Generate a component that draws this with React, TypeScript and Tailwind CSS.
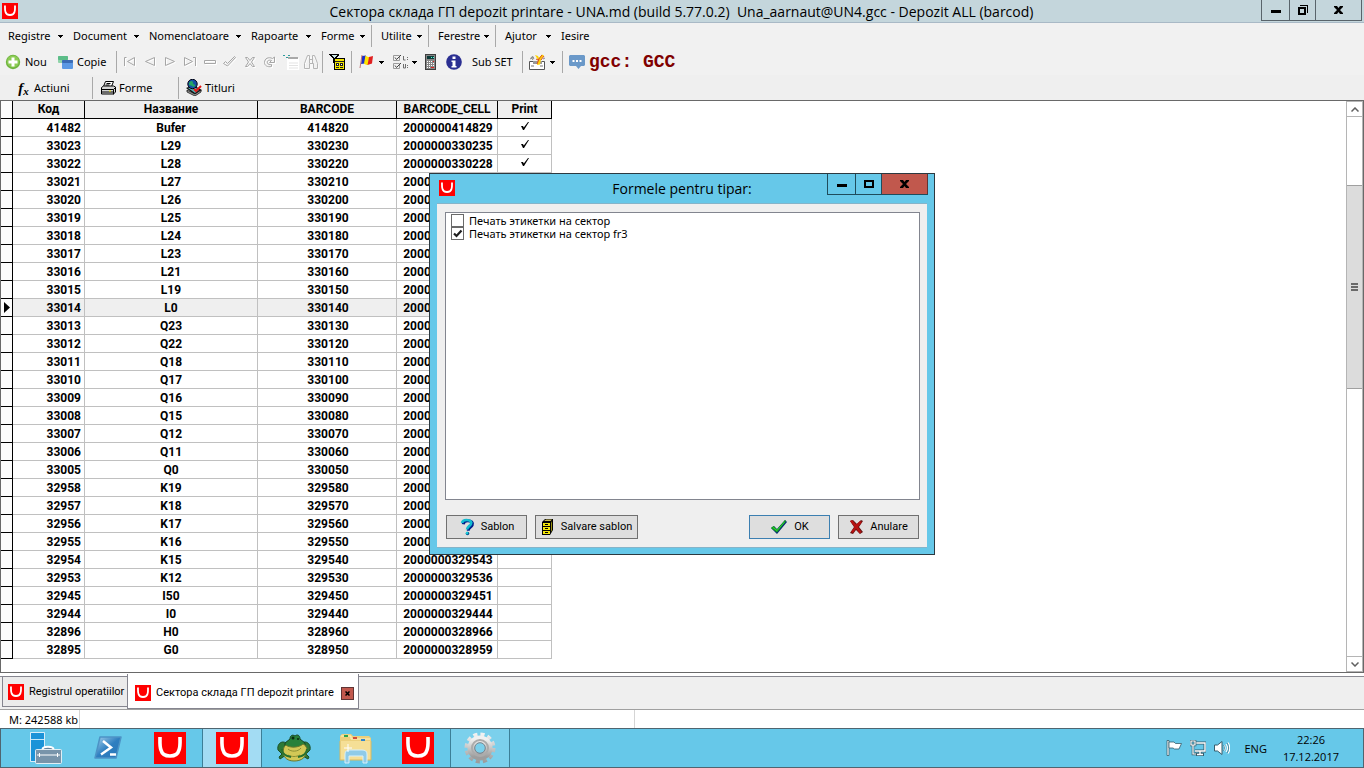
import { useState } from "react";
import type { ReactNode } from "react";

type Row = { code: string; name: string; barcode: string; cell: string; print?: boolean };

const rows: Row[] = [
  { code: "41482", name: "Bufer", barcode: "414820", cell: "2000000414829", print: true },
  { code: "33023", name: "L29", barcode: "330230", cell: "2000000330235", print: true },
  { code: "33022", name: "L28", barcode: "330220", cell: "2000000330228", print: true },
  { code: "33021", name: "L27", barcode: "330210", cell: "2000000330211" },
  { code: "33020", name: "L26", barcode: "330200", cell: "2000000330204" },
  { code: "33019", name: "L25", barcode: "330190", cell: "2000000330198" },
  { code: "33018", name: "L24", barcode: "330180", cell: "2000000330181" },
  { code: "33017", name: "L23", barcode: "330170", cell: "2000000330174" },
  { code: "33016", name: "L21", barcode: "330160", cell: "2000000330167" },
  { code: "33015", name: "L19", barcode: "330150", cell: "2000000330150" },
  { code: "33014", name: "L0", barcode: "330140", cell: "2000000330143" },
  { code: "33013", name: "Q23", barcode: "330130", cell: "2000000330136" },
  { code: "33012", name: "Q22", barcode: "330120", cell: "2000000330129" },
  { code: "33011", name: "Q18", barcode: "330110", cell: "2000000330112" },
  { code: "33010", name: "Q17", barcode: "330100", cell: "2000000330105" },
  { code: "33009", name: "Q16", barcode: "330090", cell: "2000000330099" },
  { code: "33008", name: "Q15", barcode: "330080", cell: "2000000330082" },
  { code: "33007", name: "Q12", barcode: "330070", cell: "2000000330075" },
  { code: "33006", name: "Q11", barcode: "330060", cell: "2000000330068" },
  { code: "33005", name: "Q0", barcode: "330050", cell: "2000000330051" },
  { code: "32958", name: "K19", barcode: "329580", cell: "2000000329581" },
  { code: "32957", name: "K18", barcode: "329570", cell: "2000000329574" },
  { code: "32956", name: "K17", barcode: "329560", cell: "2000000329567" },
  { code: "32955", name: "K16", barcode: "329550", cell: "2000000329550" },
  { code: "32954", name: "K15", barcode: "329540", cell: "2000000329543" },
  { code: "32953", name: "K12", barcode: "329530", cell: "2000000329536" },
  { code: "32945", name: "I50", barcode: "329450", cell: "2000000329451" },
  { code: "32944", name: "I0", barcode: "329440", cell: "2000000329444" },
  { code: "32896", name: "H0", barcode: "328960", cell: "2000000328966" },
  { code: "32895", name: "G0", barcode: "328950", cell: "2000000328959" },
];

function Logo({ size }: { size: number }) {
  return (
    <svg width={size} height={size} viewBox="0 0 32 32" className="shrink-0">
      <rect width="32" height="32" fill="#ff0000" />
      <path d="M6 5c0 5-.5 9 1 13 1 4 4 6 9 6s8-2 9-6c1.500-4 1-8 1-13" fill="none" stroke="#fff" strokeWidth="3.600" />
    </svg>
  );
}

function Arrow() {
  return (
    <svg width="5" height="3" viewBox="0 0 5 3" className="shrink-0" shapeRendering="crispEdges">
      <path d="M0 0h5v1H4v1H3v1H2V2H1V1H0z" fill="#000" />
    </svg>
  );
}

const Sep = ({ className = "" }: { className?: string }) => (
  <div className={`w-px h-[22px] bg-[#a9a9a9] shrink-0 ${className}`} />
);

function MenuItem({ label, width }: { label: string; width: string }) {
  return (
    <button className={`flex items-center justify-between whitespace-nowrap shrink-0 ${width}`}>
      {label}
      <Arrow />
    </button>
  );
}

// greyed out navigator glyph with the white shadow below it
function NavIcon({ label, d }: { label: string; d: string }) {
  return (
    <button disabled aria-label={label} className="w-5 h-5 flex items-center justify-center shrink-0">
      <svg width="16" height="16" viewBox="0 0 16 16" fill="none">
        <path d={d} stroke="#fff" transform="translate(1 1)" />
        <path d={d} stroke="#a6a6a6" />
      </svg>
    </button>
  );
}

const navIcons = [
  { label: "First", d: "M2.500 12V3.500h2M12.500 3.500v8L5.500 7.500z" },
  { label: "Previous", d: "M12.500 3.500v8L3.500 7.500z" },
  { label: "Next", d: "M3.500 3.500v8l9-4z" },
  { label: "Last", d: "M11 3.500h2.500V12M2.500 3.500v8l8-4z" },
  { label: "Delete", d: "M2.500 6.500h11v3h-11z" },
  { label: "Post", d: "M1.500 9.500l2-2 2 2 7-7 1 1-8 8.500z" },
  { label: "Cancel", d: "M3.500 3.500h2l2.500 3 2.500-3h2L9.500 8l3 4.500h-2L8 9.500l-2.500 3h-2l3-4.500z" },
  { label: "Refresh", d: "M12.500 3v5.500h-5l2-2c-3-1-5 .5-4 2.500.500 1.500 2 2 4 1.500v2c-4 1-7-1-7-4 0-4 4-6 8-4z" },
];

function CaptionButtons({ restore, danger }: { restore?: boolean; danger?: boolean }) {
  const edge = danger ? "border-[#1f4c5c]" : "border-[#59646b]";
  return (
    <div className={`flex h-[21px] border-l border-b shrink-0 ${edge}`}>
      <button aria-label="Minimize" className={`w-7 flex items-center justify-center border-r ${edge}`}>
        <svg width="10" height="10" viewBox="0 0 10 10"><path d="M0 5h10v3H0z" /></svg>
      </button>
      <button aria-label="Maximize" className={`w-[26px] flex items-center justify-center border-r ${edge}`}>
        {restore ? (
          <svg width="10" height="10" viewBox="0 0 10 10" shapeRendering="crispEdges">
            <path d="M0 2h8v8H0zM2 4v4h4V4zM2 0h8v8H9V1H2z" fillRule="evenodd" />
          </svg>
        ) : (
          <svg width="10" height="8" viewBox="0 0 10 8" shapeRendering="crispEdges">
            <path d="M0 0h10v8H0zM2 2v4h6V2z" fillRule="evenodd" />
          </svg>
        )}
      </button>
      <button
        aria-label="Close"
        className={`w-[46px] flex items-center justify-center border-r ${danger ? "bg-[#c1584d] border-[#5f3434]" : edge}`}
      >
        <svg width="9" height="8" viewBox="0 0 9 8">
          <path d="M0 0h3l1.500 2L6 0h3v1L6 4l3 3v1H6L4.500 6 3 8H0V7l3-3-3-3z" />
        </svg>
      </button>
    </div>
  );
}

function NewIcon() {
  return (
    <svg width="16" height="16" viewBox="0 0 16 16">
      <circle cx="8" cy="8" r="7.200" fill="#6fb43f" />
      <circle cx="8" cy="7.500" r="6" fill="#8ccb55" />
      <path d="M6.500 3.500h3v3h3v3h-3v3h-3v-3h-3v-3h3z" fill="#fff" />
    </svg>
  );
}

function CopyIcon() {
  return (
    <svg width="16" height="16" viewBox="0 0 16 16">
      <rect x="1" y="2" width="10" height="7" rx="1" fill="#8fd3a9" />
      <rect x="1" y="2" width="10" height="4" rx="1" fill="#5cbd88" />
      <rect x="5" y="6" width="11" height="9" rx="1" fill="#5b98e4" />
      <rect x="5" y="6" width="11" height="3" rx="1" fill="#3a6bb5" />
    </svg>
  );
}

function CalendarIcon() {
  return (
    <svg width="18" height="18" viewBox="0 0 18 18">
      <path d="M1 2h2v1H1zM4 4h2v1H4zM6 2h2v1H6z" fill="#2f9c9c" />
      <path d="M5 5h12v12H5z" fill="#fff" />
      <path d="M6 4h10v2H6z" fill="#a9a9a9" />
      <path d="M7 10h9M7 12.500h9M7 15h9" stroke="#e3e3e3" />
    </svg>
  );
}

function BinocularsIcon() {
  return (
    <svg width="16" height="16" viewBox="0 0 16 16" fill="none">
      <path d="M2 16V11l3-8h2v12H2M9 15V3h2l4 8v5" stroke="#fff" />
      <path d="M1.500 14.500v-5l3-8h2v4h3v-4h2l3 8v5h-4v-5h-4v5zM6.500 5v4M9.500 5v4" stroke="#b5b5b5" />
    </svg>
  );
}

function FilterIcon() {
  return (
    <svg width="16" height="16" viewBox="0 0 16 16" shapeRendering="crispEdges">
      <path d="M5 4h11v12H5z" fill="#000" />
      <path d="M6 5h9v10H6z" fill="#f5e800" />
      <path d="M6 7h9v1H6zM7 9h3v3H7zM11 9h3v3h-3zM7 13h3v1H7zM11 13h3v1h-3z" fill="#222" />
      <path d="M12 10h1v1h-1zM8 10h1v1H8z" fill="#fff" />
      <path d="M0 0h10v1L6 5v6L4 9V5L0 1z" fill="#000" />
      <path d="M2 1h6L5 4z" fill="#c9e4e4" />
    </svg>
  );
}

function FlagIcon() {
  return (
    <svg width="16" height="16" viewBox="0 0 16 16">
      <path d="M3 2l4-.5-1 8-4 .5z" fill="#1c2ec9" />
      <path d="M6.500 1.500c1.500 1 2.500 1.500 4 1.500L9 11c-1.500 0-2.500-.5-4-1.500z" fill="#ffe500" />
      <path d="M10 3l4-1-1 7.500-4.500 1.500z" fill="#e02020" />
      <path d="M3 1L1 14" stroke="#bf7575" />
    </svg>
  );
}

function CheckListIcon() {
  return (
    <svg width="16" height="16" viewBox="0 0 16 16" fill="none" stroke="#6e6e6e">
      <path d="M.5 1.500h6v5h-6zM.5 9.500h6v5h-6z" stroke="#9b9b9b" />
      <path d="M2 3.500l1.500 2L8 1M2 11.500l1.500 2L8 9" stroke="#444" />
      <path d="M10.500 2v4h2M10.500 10v4h2v-4M14.500 3v1M14.500 5v1M14.500 11v1M14.500 13v1" />
    </svg>
  );
}

function CalculatorIcon() {
  return (
    <svg width="12" height="16" viewBox="0 0 12 16" shapeRendering="crispEdges">
      <path d="M0 0h11v16H0z" fill="#3d3d3d" />
      <path d="M1 1h9v14H1z" fill="#868686" />
      <path d="M2 2h7v3H2z" fill="#0c3938" />
      <path d="M6 3h1v1H6zM8 3h1v1H8z" fill="#4fffd9" />
      <path d="M2 7h1v1H2zM4 7h1v1H4zM6 7h1v1H6zM2 9h1v1H2zM4 9h1v1H4zM6 9h1v1H6zM8 9h1v1H8zM2 11h1v1H2zM4 11h1v1H4zM6 11h1v1H6zM8 11h1v1H8zM2 13h1v1H2zM4 13h1v1H4z" fill="#fff" />
      <path d="M8 7h1v1H8zM6 13h3v1H6z" fill="#d22" />
    </svg>
  );
}

function InfoIcon() {
  return (
    <svg width="16" height="16" viewBox="0 0 16 16">
      <circle cx="8" cy="8" r="7.800" fill="#2b2f92" />
      <path d="M6.500 2.500h3v2.500h-3zM5.500 6.500h4V12h1v1.500h-5V12h1V8h-1z" fill="#fff" />
    </svg>
  );
}

function MailIcon() {
  return (
    <svg width="17" height="16" viewBox="0 0 17 16">
      <path d="M.5 7.500h15v8H.5z" fill="#fff" stroke="#555" />
      <path d="M1 5l4-2M2 3l2 3M3 2l2 3M14 5l2-1" stroke="#888" />
      <path d="M4 7h9v3H4z" fill="#999" />
      <path d="M6 1l3 1 1 2 3-3.500 2 1-3 4-1 5-3 .5 1-5z" fill="#ffd400" />
      <path d="M7 5l2 1 4-5M12 6l3-4M8 10l2-5" stroke="#d84a2a" fill="none" />
      <path d="M2 12h3M11 12h3" stroke="#777" />
    </svg>
  );
}

function ChatIcon() {
  return (
    <svg width="16" height="16" viewBox="0 0 16 16">
      <path d="M1 1h14l1 1v9l-1 1h-3l-2.500 3L7 12H1l-1-1V2z" fill="#6b99c9" />
      <path d="M3.500 6h2v2h-2zM7 6h2v2H7zM10.500 6h2v2h-2z" fill="#fff" />
    </svg>
  );
}

function PrinterIcon() {
  return (
    <svg width="16" height="16" viewBox="0 0 16 16">
      <path d="M5.500 1.500h8l-2 5h-8z" fill="#fff" stroke="#000" />
      <path d="M6.500 3.500h4M5.500 5h4" stroke="#000" />
      <path d="M1.500 7.500l2-1.500h10l2 1v5l-2 2h-12z" fill="#d5d5d5" stroke="#000" />
      <path d="M1 9.500h12.500L15 8M13.500 9.500v5M1 12h12" stroke="#000" fill="none" />
      <path d="M9 11h2" stroke="#e8e800" />
    </svg>
  );
}

function BookIcon() {
  return (
    <svg width="16" height="17" viewBox="0 0 16 17">
      <path d="M0 9l7-3 9 5-7 5z" fill="#111" />
      <path d="M1 11l8 4 6-4v2l-6 4-8-4z" fill="#9a9a9a" stroke="#000" strokeWidth=".7" />
      <path d="M2 9l5-2 6 4-4 3z" fill="#57aeb0" />
      <circle cx="6.500" cy="5" r="4.700" fill="#1650a8" stroke="#001" />
      <path d="M3 4c2-3 4-2 4 0s3 1 2 3-4-1-6-1z" fill="#25a565" />
      <path d="M8 10l2 2 5-5" stroke="#e41818" strokeWidth="2" fill="none" />
    </svg>
  );
}

function QuestionIcon() {
  return (
    <svg width="16" height="18" viewBox="0 0 16 18" fill="none">
      <path d="M3.500 5.500C4 2.500 6 2 8 2c4 0 5.500 2 4.500 4.500C11.500 8.500 8.500 9 8.500 12" stroke="#001f8a" strokeWidth="3" transform="translate(.7 .7)" />
      <path d="M3 5C3.500 2.500 5.500 2 7.500 2c4 0 5.500 2 4.500 4S8 9 8 11.500" stroke="#12bcd0" strokeWidth="2.600" />
      <circle cx="8.500" cy="15.500" r="1.800" fill="#085e96" />
      <circle cx="8" cy="15" r="1.200" fill="#12cbd9" />
    </svg>
  );
}

function CabinetIcon() {
  return (
    <svg width="14" height="16" viewBox="0 0 14 16">
      <path d="M1 3l3-3h8v11l-3 5H1z" fill="#000" />
      <path d="M3 2l2-1.500h6L9.500 2z" fill="#c9bb56" />
      <path d="M2 4h7v11H2z" fill="#f3e50a" />
      <path d="M2 7.500h7M2 11.500h7" stroke="#000" />
      <path d="M4 5h3v1H4zM4 9h3v1H4zM4 13h3v1H4z" fill="#000" />
      <path d="M10 4l1-2v9l-1 2z" fill="#9b9410" />
    </svg>
  );
}

function OkIcon() {
  return (
    <svg width="18" height="16" viewBox="0 0 18 16">
      <path d="M1 9l3-2 3 3 8-9 2 2-10 12z" fill="#052d75" />
      <path d="M1 9l2.500-2L7 10.500 15 1l1 1L7 13.500z" fill="#14a31b" />
      <path d="M3 8.500l4 3L14.500 3" stroke="#35da3e" fill="none" strokeWidth=".8" />
    </svg>
  );
}

function CancelIcon() {
  return (
    <svg width="15" height="16" viewBox="0 0 15 16">
      <path d="M1 2l3-1 4 4 4-4 2 1-4 6 4 5-3 2-4-4-3 4-3-1 4-6z" fill="#651313" />
      <path d="M1 2l2-1 4 4.500L11 2l2 1-4 5 3.500 5-2 1.500L7 9.500 4 14l-2-1 3.500-5z" fill="#b81212" />
    </svg>
  );
}

function ServerIcon() {
  return (
    <svg width="32" height="32" viewBox="0 0 32 32">
      <path d="M.5.5h14v29H.5z" fill="#1b93d8" stroke="#fff" strokeWidth=".8" />
      <path d="M1 7.500h13" stroke="#c5e8f8" />
      <path d="M13 17.500c0-3 10-3 10 0" fill="none" stroke="#fff" strokeWidth="3" />
      <path d="M14 18c0-2 8-2 8 0" fill="none" stroke="#65829a" strokeWidth="1.500" />
      <rect x="5.500" y="17.500" width="26" height="14" rx="1" fill="#7894aa" stroke="#fff" strokeWidth=".8" />
      <path d="M7 23h23" stroke="#fff" />
      <path d="M9 21h1v4H9zM27 21h1v4h-1z" fill="#fff" />
    </svg>
  );
}

function PowerShellIcon() {
  return (
    <svg width="32" height="32" viewBox="0 0 32 32">
      <defs>
        <linearGradient id="ps" x1="0" y1="0" x2="1" y2="1">
          <stop offset="0" stopColor="#a9d4ef" />
          <stop offset=".5" stopColor="#2f7fc0" />
          <stop offset="1" stopColor="#2a76b8" />
        </linearGradient>
      </defs>
      <path d="M8 5h21l-5 21H3z" fill="url(#ps)" stroke="#4c93c6" strokeWidth="1.500" strokeLinejoin="round" />
      <path d="M11 9l8 6.500L9 22.500M18 22.500h6" fill="none" stroke="#fff" strokeWidth="2.500" />
    </svg>
  );
}

function FrogIcon() {
  return (
    <svg width="34" height="32" viewBox="0 0 34 32">
      <path d="M9 23l-6 4-1-2 3-3-4-4c-1-5 2-8 5-8 2 0 3 1 4 2M24 23l7 4 1-2-3-3 4-4c1-5-2-8-5-8-2 0-3 1-4 2" fill="#2d7a37" stroke="#1b5027" />
      <path d="M8 11l5-4c0-3 2-5 5-3 2-2 5-1 5 3l5 4v6H8z" fill="#27813a" stroke="#174420" />
      <path d="M9 13c3 3 13 3 17-1 4 2 5 6 3 10-2 5-6 7-12 7S7 26 6 21c0-4 1-7 3-8z" fill="#d2c856" stroke="#6b782b" />
      <path d="M11 17c3 3 10 3 13-1M11 23c4 2 8 2 12 0" stroke="#8c8f35" fill="none" />
      <path d="M5 17c0 5 3 7 9 8M30 17c0 5-4 7-9 8" stroke="#27702f" strokeWidth="2" fill="none" />
      <circle cx="16" cy="6" r="1.500" fill="#0a2c10" />
      <circle cx="21" cy="7" r="1" fill="#0a2c10" />
    </svg>
  );
}

function ExplorerIcon() {
  return (
    <svg width="34" height="32" viewBox="0 0 34 32">
      <path d="M1 4l2-2h9l2 2h16l2 2v22H1z" fill="#ecd07c" />
      <path d="M2 4h10v3h19" stroke="#fff3c4" fill="none" />
      <path d="M5 3h4v2H5z" fill="#2da44b" />
      <path d="M14 5h4v2h-4z" fill="#d14d3b" />
      <path d="M22 7h4v2h-4z" fill="#2f86ce" />
      <path d="M1 9h31v19H1z" fill="#f5df96" />
      <path d="M1 9v19h31V9" fill="none" stroke="#d9b95f" />
      <path d="M6 31v-9c0-3 2-4 5-4h12c3 0 5 1 5 4v9h-4v-7H10v7z" fill="#8fcbe8" stroke="#d8f0fa" />
      <path d="M9 12v8M5 16h8" stroke="#fff" />
    </svg>
  );
}

function GearIcon() {
  return (
    <svg width="32" height="32" viewBox="0 0 32 32">
      <defs>
        <linearGradient id="gear" x1="0" y1="0" x2="0" y2="1">
          <stop offset="0" stopColor="#f1f1f1" />
          <stop offset="1" stopColor="#9d9d9d" />
        </linearGradient>
      </defs>
      <circle cx="16" cy="16" r="13.500" fill="none" stroke="url(#gear)" strokeWidth="4" strokeDasharray="4.070 3" />
      <circle cx="16" cy="16" r="8.800" fill="none" stroke="url(#gear)" strokeWidth="7.500" />
      <circle cx="16" cy="16" r="8" fill="none" stroke="#ababab" strokeWidth="2" />
      <circle cx="16" cy="16" r="5.300" fill="none" stroke="#71838e" />
    </svg>
  );
}

const tasks: { label: string; icon: ReactNode; state?: "active" | "open" }[] = [
  { label: "Server Manager", icon: <ServerIcon /> },
  { label: "PowerShell", icon: <PowerShellIcon /> },
  { label: "UNA", icon: <Logo size={32} /> },
  { label: "UNA.md", icon: <Logo size={32} />, state: "active" },
  { label: "Toad", icon: <FrogIcon /> },
  { label: "Explorer", icon: <ExplorerIcon /> },
  { label: "UNA", icon: <Logo size={32} /> },
  { label: "Settings", icon: <GearIcon />, state: "open" },
];

const taskStyle = {
  active: "bg-[#a3dcf3] border-[#3c7f97]",
  open: "bg-[#7bd0ec] border-[#3c7f97]",
};

function TitleBar() {
  return (
    <header className="flex items-start h-[23px] bg-[#c4d6dc] border-b border-[#a9b9c6]">
      <div className="w-[102px] pl-[2px] pt-[3px] shrink-0">
        <Logo size={16} />
      </div>
      <h1 className="flex-1 text-center font-['Open_Sans','Noto_Sans',sans-serif] text-[14px] leading-[23px] whitespace-pre">
        {"Сектора склада ГП depozit printare - UNA.md (build 5.77.0.2)  Una_aarnaut@UN4.gcc - Depozit ALL (barcod)"}
      </h1>
      <div className="pr-[2px]">
        <CaptionButtons restore />
      </div>
    </header>
  );
}

function MenuBar() {
  return (
    <nav className="flex items-center gap-[10px] h-[26px] pl-2 bg-[#f1f1f1]">
      <MenuItem label="Registre" width="w-[55px]" />
      <MenuItem label="Document" width="w-[66px]" />
      <MenuItem label="Nomenclatoare" width="w-[92px]" />
      <MenuItem label="Rapoarte" width="w-[60px]" />
      <MenuItem label="Forme" width="w-[44px]" />
      <Sep className="-ml-1 -mr-px" />
      <MenuItem label="Utilite" width="w-[41px]" />
      <Sep className="-ml-1 -mr-px" />
      <MenuItem label="Ferestre" width="w-[51px]" />
      <Sep className="-ml-1 -mr-px" />
      <MenuItem label="Ajutor" width="w-[46px]" />
      <button>Iesire</button>
    </nav>
  );
}

function ToolBar() {
  return (
    <div className="flex items-center h-[26px] pl-[5px] bg-[#f1f1f1] whitespace-nowrap">
      <button className="flex items-center gap-1 w-[52px] shrink-0"><NewIcon /> Nou</button>
      <button className="flex items-center gap-1 w-[59px] shrink-0"><CopyIcon /> Copie</button>
      <Sep className="mr-[3px]" />
      {navIcons.map((i) => <NavIcon key={i.label} label={i.label} d={i.d} />)}
      <button disabled aria-label="Calendar" className="ml-[2px]"><CalendarIcon /></button>
      <button disabled aria-label="Search" className="mx-[3px]"><BinocularsIcon /></button>
      <Sep />
      <button aria-label="Filter" className="mx-[6px]"><FilterIcon /></button>
      <Sep />
      <button aria-label="Language" className="flex items-center gap-1 ml-[7px] mr-[9px]"><FlagIcon /><Arrow /></button>
      <button aria-label="Options" className="flex items-center gap-[3px] mr-2"><CheckListIcon /><Arrow /></button>
      <button aria-label="Calculator"><CalculatorIcon /></button>
      <button aria-label="Info" className="ml-[9px] mr-[10px]"><InfoIcon /></button>
      <button className="w-[50px] text-left shrink-0">Sub SET</button>
      <Sep />
      <button aria-label="Send" className="flex items-center gap-1 ml-[6px] mr-[7px]"><MailIcon /><Arrow /></button>
      <Sep />
      <div className="flex items-center gap-1 pl-[6px]">
        <ChatIcon />
        <span className="font-['Liberation_Mono',monospace] font-bold text-[18px] leading-6 text-[#800000]">gcc: GCC</span>
      </div>
    </div>
  );
}

function ActionBar() {
  return (
    <div className="flex items-center h-[25px] bg-[#efefef] whitespace-nowrap">
      <button className="flex items-center gap-1 w-[92px] pl-[17px]">
        <i className="w-[13px] font-['Liberation_Serif',serif] font-bold text-[15px] leading-4">
          f<sub className="text-[11px]">x</sub>
        </i>
        Actiuni
      </button>
      <Sep />
      <button className="flex items-center gap-[3px] w-[85px] pl-[7px]"><PrinterIcon /> Forme</button>
      <Sep />
      <button className="flex items-center gap-[3px] pl-[7px]"><BookIcon /> Titluri</button>
    </div>
  );
}

function Grid() {
  const th = "border-r border-b border-black bg-[#efefef] p-0 font-bold";
  const td = "border-r border-b border-[#c0c0c0] p-0 pt-[2px]";
  return (
    <table className="table-fixed w-[551px] border-separate border-spacing-0 font-['Roboto',sans-serif] font-bold text-[12px] leading-[15px] text-black text-center">
      <colgroup>
        <col className="w-3" />
        <col className="w-[72px]" />
        <col className="w-[173px]" />
        <col className="w-[139px]" />
        <col className="w-[101px]" />
        <col className="w-[54px]" />
      </colgroup>
      <thead>
        <tr className="h-[18px]">
          <th aria-label="Current row" className="border-r border-b border-black bg-[#fcfcfc] p-0" />
          <th className={th}>Код</th>
          <th className={th}>Название</th>
          <th className={th}>BARCODE</th>
          <th className={th}>BARCODE_CELL</th>
          <th className={th}>Print</th>
        </tr>
      </thead>
      <tbody>
        {rows.map((r) => {
          const current = r.code === "33014";
          return (
            <tr key={r.code} className={current ? "h-[18px] bg-[#efefef]" : "h-[18px]"}>
              <td className="border-r border-b border-black bg-[#fcfcfc] p-0">
                {current && (
                  <svg width="6" height="11" viewBox="0 0 6 11" className="ml-[3px]"><path d="M0 0l6 5.500L0 11z" /></svg>
                )}
              </td>
              <td className={`${td} text-right pr-[3px]`}>{r.code}</td>
              <td className={td}>{r.name}</td>
              <td className={`${td} pl-[2px]`}>{r.barcode}</td>
              <td className={`${td} pl-[2px]`}>{r.cell}</td>
              <td className="border-r border-b border-[#c0c0c0] p-0">
                {r.print && (
                  <svg width="8" height="8" viewBox="0 0 8 8" className="mx-auto mb-[3px]">
                    <path d="M0 4h2l.8 1.500L7 0h1L3 8H2z" />
                  </svg>
                )}
              </td>
            </tr>
          );
        })}
      </tbody>
    </table>
  );
}

function ScrollBar() {
  const chevron = "w-full h-4 flex items-center justify-center border-y border-[#b5b5b5] bg-white shrink-0";
  return (
    <div className="w-[17px] flex flex-col border-x border-[#b5b5b5] bg-white shrink-0">
      <button aria-label="Scroll up" className={chevron}>
        <svg width="8" height="5" viewBox="0 0 8 5" fill="none" stroke="#606060" strokeWidth="1.500"><path d="M.5 4.500L4 1l3.500 3.500" /></svg>
      </button>
      <div className="grow-[68] basis-0" />
      <div className="h-[204px] flex flex-col items-center justify-center gap-px border-y border-[#a0a0a0] bg-[#dcdcdc]">
        <i className="w-[7px] h-[2px] bg-[#6a6a6a]" />
        <i className="w-[7px] h-[2px] bg-[#6a6a6a]" />
        <i className="w-[7px] h-[2px] bg-[#6a6a6a]" />
      </div>
      <div className="grow-[266] basis-0" />
      <button aria-label="Scroll down" className={chevron}>
        <svg width="8" height="5" viewBox="0 0 8 5" fill="none" stroke="#606060" strokeWidth="1.500"><path d="M.5.500L4 4l3.500-3.500" /></svg>
      </button>
    </div>
  );
}

function PrintDialog() {
  const [forms, setForms] = useState([
    { label: "Печать этикетки на сектор", checked: false },
    { label: "Печать этикетки на сектор fr3", checked: true },
  ]);

  function toggle(index: number) {
    setForms((f) => f.map((item, i) => (i === index ? { ...item, checked: !item.checked } : item)));
  }

  const btn = "h-6 flex items-center justify-center gap-[6px] border bg-[#dedede] whitespace-nowrap";

  return (
    <div role="dialog" aria-labelledby="dialog-title" className="w-[506px] border border-[#2c3940] bg-[#66c8e9]">
      <div className="flex items-start h-[29px]">
        <div className="w-[107px] pl-[9px] pt-[6px] shrink-0"><Logo size={16} /></div>
        <h2 id="dialog-title" className="flex-1 text-center font-['Open_Sans','Noto_Sans',sans-serif] text-[14px] leading-[29px]">
          Formele pentru tipar:
        </h2>
        <div className="pr-[6px]"><CaptionButtons danger /></div>
      </div>
      <div className="mx-[7px] mb-[6px] pl-2 pr-[7px] pt-2 pb-2 bg-[#efefef] border-y border-[#85b4c9]">
        <div className="h-[288px] pl-[5px] pt-px border border-[#82858f] bg-white">
          {forms.map((f, i) => (
            <label key={f.label} className="flex items-center gap-[5px] h-[13px] leading-[13px]">
              <span className="relative flex">
                <input
                  type="checkbox"
                  checked={f.checked}
                  onChange={() => toggle(i)}
                  className="appearance-none w-[13px] h-[13px] border border-[#6a6a6a] bg-white"
                />
                {f.checked && (
                  <svg width="13" height="13" viewBox="0 0 13 13" className="absolute inset-0 pointer-events-none">
                    <path d="M3 6.500L5.500 9 10.500 3.500" fill="none" stroke="#1e1e1e" strokeWidth="2.200" />
                  </svg>
                )}
              </span>
              {f.label}
            </label>
          ))}
        </div>
        <div className="flex gap-2 px-px pt-[15px] font-['Roboto',sans-serif]">
          <button className={`${btn} w-[81px] border-[#707070]`}><QuestionIcon /> Sablon</button>
          <button className={`${btn} w-[103px] mr-auto border-[#707070]`}><CabinetIcon /> Salvare sablon</button>
          <button className={`${btn} w-[81px] border-[#3c7fb1]`}><OkIcon /> OK</button>
          <button className={`${btn} w-[81px] border-[#707070]`}><CancelIcon /> Anulare</button>
        </div>
      </div>
    </div>
  );
}

function WindowTabs() {
  return (
    <div className="flex items-start h-9 bg-[#efefef] border-t-[3px] border-white font-['Roboto',sans-serif]">
      <div className="w-[2px] h-px bg-[#8a8a92]" />
      <button className="flex items-center gap-[5px] w-[125px] h-[31px] pl-[5px] border border-r-0 border-[#85858f] bg-[#ebebeb] whitespace-nowrap">
        <Logo size={16} /> Registrul operatiilor
      </button>
      <div className="flex items-center gap-[5px] w-[232px] h-[35px] -mt-[2px] pt-[4px] pl-[7px] pr-1 border-x border-b border-[#85858f] bg-white whitespace-nowrap">
        <Logo size={16} />
        <button>Сектора склада ГП depozit printare</button>
        <button aria-label="Close tab" className="w-[13px] h-[13px] ml-auto shrink-0 flex items-center justify-center border border-[#5f3434] bg-[#c1584d]">
          <svg width="5" height="5" viewBox="0 0 5 5"><path d="M.5.500l4 4M4.500.500l-4 4" stroke="#000" strokeWidth="1.500" /></svg>
        </button>
      </div>
      <div className="flex-1 h-px bg-[#8a8a92]" />
    </div>
  );
}

function StatusBar() {
  return (
    <footer className="flex items-stretch h-[19px] bg-white border-t border-[#a0a0a0] leading-[19px]">
      <div className="w-[80px] pl-[9px] border-r border-[#d5d5d5] whitespace-nowrap">M: 242588 kb</div>
      <div className="w-[555px] border-r border-[#d5d5d5]" />
    </footer>
  );
}

function TaskBar() {
  return (
    <div className="flex items-stretch h-10 pl-[15px] border border-[#4f6570] bg-[#66c8e9]">
      <div className="flex gap-[2px]">
        {tasks.map((t, i) => (
          <button
            key={i}
            aria-label={t.label}
            className={`w-[60px] flex items-center justify-center border-x ${t.state ? taskStyle[t.state] : "border-transparent"}`}
          >
            {t.icon}
          </button>
        ))}
      </div>
      <div className="flex items-center ml-auto pr-[24px] font-['Open_Sans','Noto_Sans',sans-serif] leading-[17px]">
        <svg width="16" height="16" viewBox="0 0 16 16" className="mr-2">
          <path d="M1 .5h2v15H1z" fill="#fff" stroke="#365d6c" strokeWidth=".8" />
          <path d="M3 2h5l1.500 1.500H15.500L13 9H8.500L7 8H3z" fill="#fff" stroke="#365d6c" strokeWidth=".8" />
        </svg>
        <svg width="16" height="16" viewBox="0 0 16 16" className="mr-2" fill="none">
          <path d="M5 3h10v8H5M10 11v3M6 14.500h8" stroke="#365d6c" strokeWidth="3" />
          <path d="M6 3h9v8H5M10 11v3M7 14.500h6" stroke="#fff" strokeWidth="1.400" />
          <path d="M1 1h4v4H1zM3 5v9h3" stroke="#365d6c" strokeWidth="2.600" />
          <path d="M1 1h4v4H1zM3 5v9h3" stroke="#fff" strokeWidth="1.200" />
        </svg>
        <svg width="16" height="16" viewBox="0 0 16 16" className="mr-[14px]" fill="none" stroke="#365d6c">
          <path d="M.5 5h3L8 1.500v13L3.500 11h-3z" fill="#fff" />
          <path d="M10 5.500c1.300 1.500 1.300 3.500 0 5M12 4c2 2.500 2 5.500 0 8M14 2.500c2.300 3.500 2.300 7.500 0 11" stroke="#fff" strokeWidth="1.200" />
          <path d="M9.500 5c1.300 1.500 1.300 4.500 0 6M13 3c2 2.500 2 7.500 0 10" strokeWidth=".6" />
        </svg>
        <span className="mr-[16px]">ENG</span>
        <time className="text-center" dateTime="2017-12-17T22:26">
          22:26
          <br />
          17.12.2017
        </time>
      </div>
    </div>
  );
}

export default function App() {
  return (
    <div className="relative min-h-screen flex flex-col bg-white text-black font-['Noto_Sans',sans-serif] text-[11px] leading-[14px]">
      <TitleBar />
      <MenuBar />
      <ToolBar />
      <ActionBar />
      <main className="flex-1 flex items-stretch border border-[#696969] bg-white">
        <div className="flex-1">
          <Grid />
        </div>
        <ScrollBar />
      </main>
      <WindowTabs />
      <StatusBar />
      <TaskBar />
      <div className="absolute inset-x-0 top-[173px] flex justify-center">
        <PrintDialog />
      </div>
    </div>
  );
}
